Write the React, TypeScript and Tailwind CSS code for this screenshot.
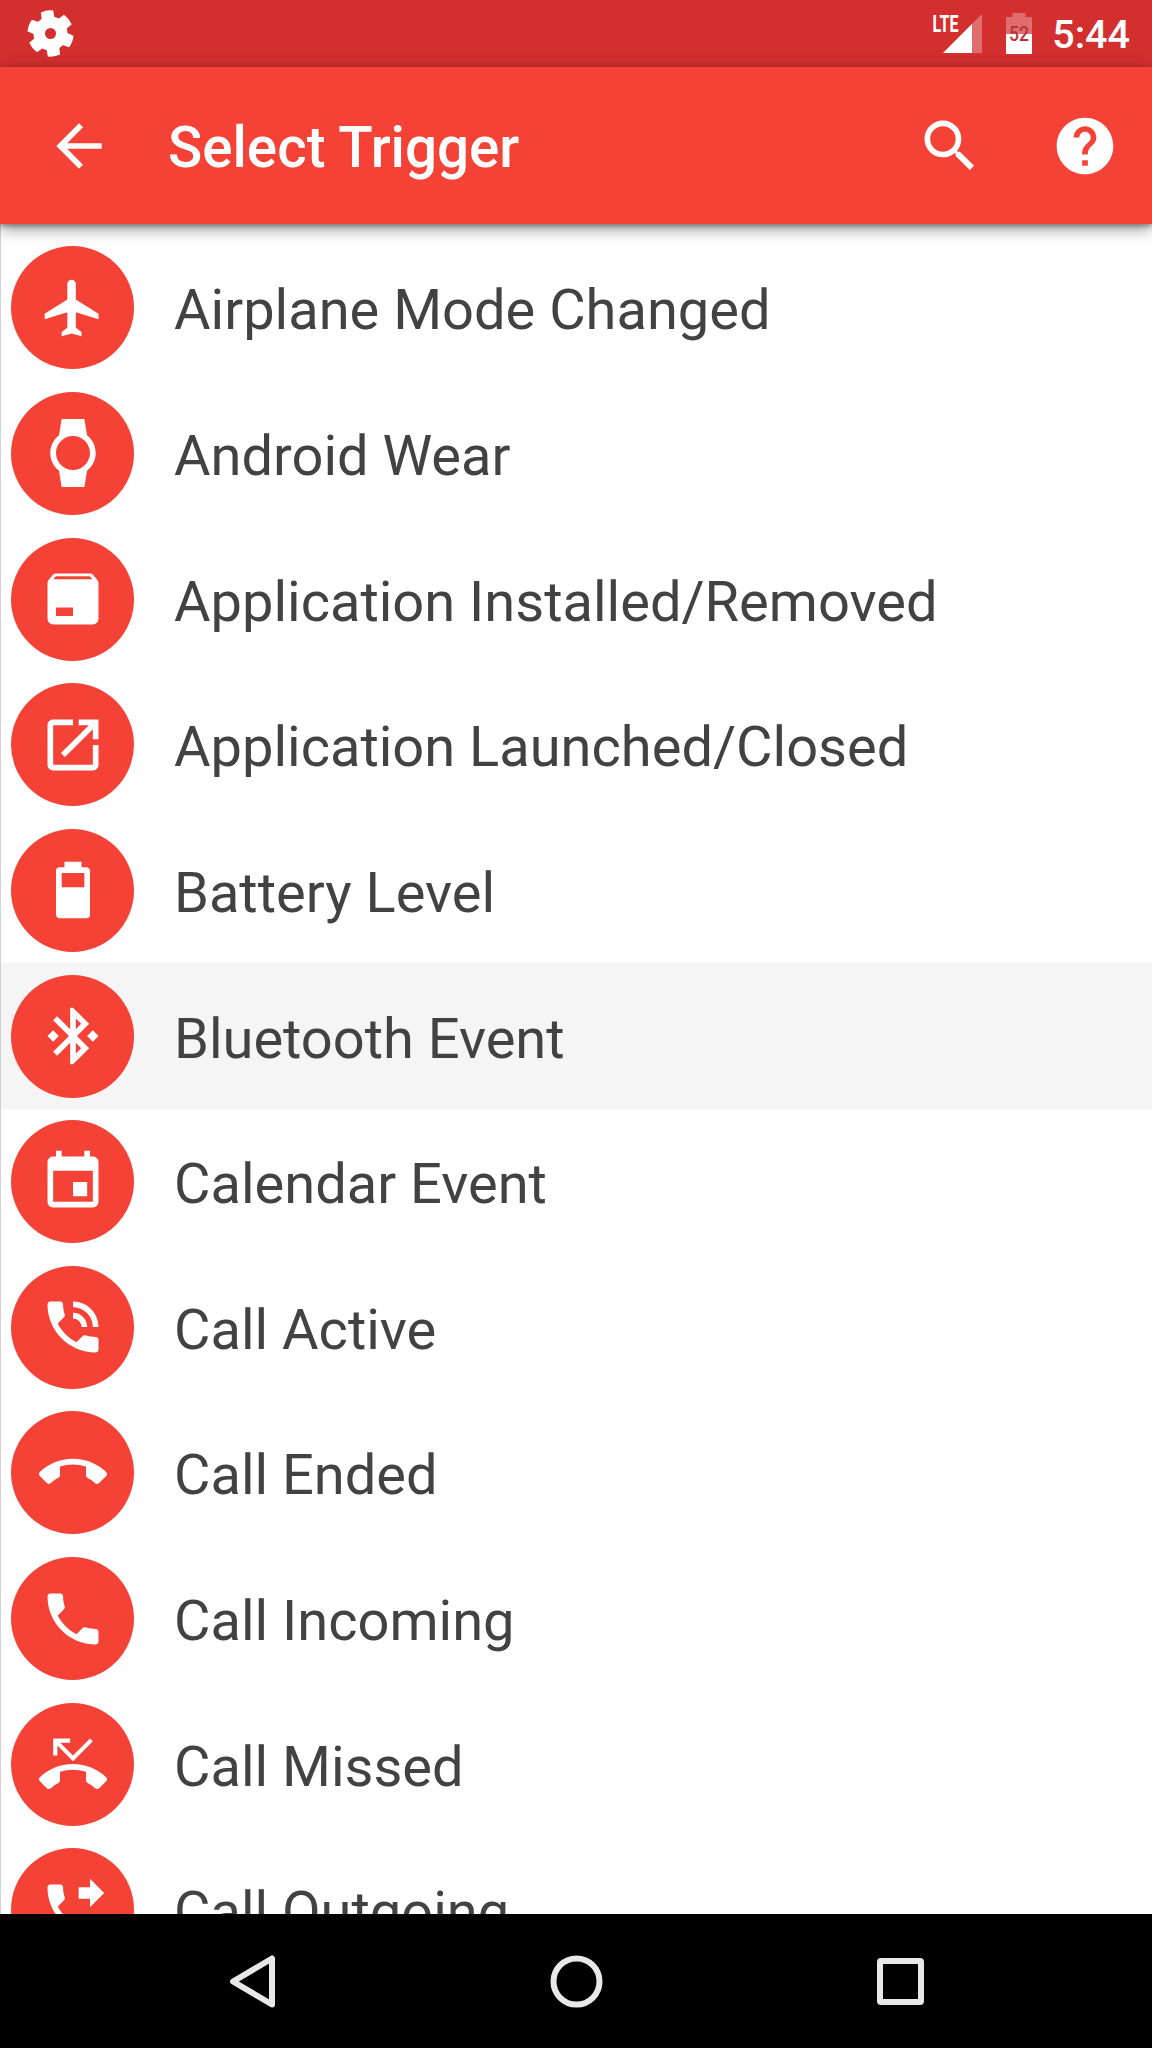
import React from 'react';

interface Trigger {
    label: string;
    icon: string;
    pressed?: boolean;
}

const TRIGGERS: Trigger[] = [
    {
        label: 'Airplane Mode Changed',
        icon: 'M21 16v-2l-8-5V3.5c0-.83-.67-1.5-1.5-1.5S10 2.67 10 3.5V9l-8 5v2l8-2.5V19l-2 1.5V22l3.5-1 3.5 1v-1.5L13 19v-5.5l8 2.5z',
    },
    {
        label: 'Android Wear',
        icon: 'M20 12c0-2.54-1.19-4.81-3.04-6.27L16 0H8l-.95 5.73C5.19 7.19 4 9.45 4 12s1.19 4.81 3.05 6.27L8 24h8l.96-5.73C18.81 16.81 20 14.54 20 12zM6 12c0-3.31 2.69-6 6-6s6 2.69 6 6-2.69 6-6 6-6-2.69-6-6z',
    },
    {
        label: 'Application Installed/Removed',
        icon: 'M5.12 5H18.87L17.93 4H5.93L5.12 5M20.54 5.23C20.83 5.57 21 6 21 6.5V19A2 2 0 0 1 19 21H5A2 2 0 0 1 3 19V6.5C3 6 3.17 5.57 3.46 5.23L4.84 3.55C5.12 3.21 5.53 3 6 3H18C18.47 3 18.88 3.21 19.15 3.55L20.54 5.23M6 18H12V15H6V18Z',
    },
    {
        label: 'Application Launched/Closed',
        icon: 'M19 19H5V5h7V3H5c-1.11 0-2 .9-2 2v14c0 1.1.89 2 2 2h14c1.1 0 2-.9 2-2v-7h-2v7zM14 3v2h3.59l-9.83 9.83 1.41 1.41L19 6.41V10h2V3h-7z',
    },
    {
        label: 'Battery Level',
        icon: 'M16 11H8V6H16M16.67 4H15V2H9V4H7.33A1.33 1.33 0 0 0 6 5.33V20.67C6 21.4 6.6 22 7.33 22H16.67A1.33 1.33 0 0 0 18 20.67V5.33C18 4.6 17.4 4 16.67 4Z',
    },
    {
        label: 'Bluetooth Event',
        icon: 'M7 12l-2-2-2 2 2 2 2-2zm10.71-4.29L12 2h-1v7.59L6.41 5 5 6.41 10.59 12 5 17.59 6.41 19 11 14.41V22h1l5.71-5.71-4.3-4.29 4.3-4.29zM13 5.83l1.88 1.88L13 9.59V5.83zm1.88 10.46L13 18.17v-3.76l1.88 1.88zM19 10l-2 2 2 2 2-2-2-2z',
        pressed: true,
    },
    {
        label: 'Calendar Event',
        icon: 'M17 12h-5v5h5v-5zM16 1v2H8V1H6v2H5c-1.11 0-1.99.9-1.99 2L3 19c0 1.1.89 2 2 2h14c1.1 0 2-.9 2-2V5c0-1.1-.9-2-2-2h-1V1h-2zm3 18H5V8h14v11z',
    },
    {
        label: 'Call Active',
        icon: 'M20 15.5c-1.25 0-2.45-.2-3.57-.57-.35-.11-.74-.03-1.02.24l-2.2 2.2c-2.83-1.44-5.15-3.75-6.59-6.59l2.2-2.21c.28-.26.36-.65.25-1C8.7 6.45 8.5 5.25 8.5 4c0-.55-.45-1-1-1H4c-.55 0-1 .45-1 1 0 9.39 7.61 17 17 17 .55 0 1-.45 1-1v-3.5c0-.55-.45-1-1-1zM19 12h2c0-4.97-4.03-9-9-9v2c3.87 0 7 3.13 7 7zm-4 0h2c0-2.76-2.24-5-5-5v2c1.66 0 3 1.34 3 3z',
    },
    {
        label: 'Call Ended',
        icon: 'M12 9c-1.6 0-3.15.25-4.6.72v3.1c0 .39-.23.74-.56.9-.98.49-1.87 1.12-2.66 1.85-.18.18-.43.28-.7.28-.28 0-.53-.11-.71-.29L.29 13.08c-.18-.17-.29-.42-.29-.7 0-.28.11-.53.29-.71C3.34 8.78 7.46 7 12 7s8.66 1.78 11.71 4.67c.18.18.29.43.29.71 0 .28-.11.53-.29.71l-2.48 2.48c-.18.18-.43.29-.71.29-.27 0-.52-.11-.7-.28-.79-.74-1.69-1.36-2.67-1.85-.33-.16-.56-.5-.56-.9v-3.1C15.15 9.25 13.6 9 12 9z',
    },
    {
        label: 'Call Incoming',
        icon: 'M6.62 10.79c1.44 2.83 3.76 5.14 6.59 6.59l2.2-2.2c.27-.27.67-.36 1.02-.24 1.12.37 2.33.57 3.57.57.55 0 1 .45 1 1V20c0 .55-.45 1-1 1-9.39 0-17-7.61-17-17 0-.55.45-1 1-1h3.5c.55 0 1 .45 1 1 0 1.25.2 2.45.57 3.57.11.35.03.74-.25 1.02l-2.2 2.2z',
    },
    {
        label: 'Call Missed',
        icon: 'M6.5 5.5L12 11l7-7-1-1-6 6-4.5-4.5H11V3H5v6h1.5V5.5zm17.21 11.17C20.66 13.78 16.54 12 12 12 7.46 12 3.34 13.78.29 16.67c-.18.18-.29.43-.29.71 0 .28.11.53.29.71l2.48 2.48c.18.18.43.29.71.29.27 0 .52-.11.7-.28.79-.74 1.69-1.36 2.66-1.85.33-.16.56-.5.56-.9v-3.1c1.45-.48 3-.73 4.6-.73 1.6 0 3.15.25 4.6.72v3.1c0 .39.23.74.56.9.98.49 1.87 1.12 2.66 1.85.18.18.43.28.7.28.28 0 .53-.11.71-.29l2.48-2.48c.18-.18.29-.43.29-.71 0-.28-.12-.52-.3-.7z',
    },
    {
        label: 'Call Outgoing',
        icon: 'M18 11l5-5-5-5v3h-4v4h4v3zm2 4.5c-1.25 0-2.45-.2-3.57-.57-.35-.11-.74-.03-1.02.24l-2.2 2.2c-2.83-1.44-5.15-3.75-6.59-6.59l2.2-2.21c.28-.26.36-.65.25-1C8.7 6.45 8.5 5.25 8.5 4c0-.55-.45-1-1-1H4c-.55 0-1 .45-1 1 0 9.39 7.61 17 17 17 .55 0 1-.45 1-1v-3.5c0-.55-.45-1-1-1z',
    },
];

const ARROW_BACK = 'M20 11H7.83l5.59-5.59L12 4l-8 8 8 8 1.41-1.41L7.83 13H20v-2z';
const SEARCH = 'M15.5 14h-.79l-.28-.27C15.41 12.59 16 11.11 16 9.5 16 5.91 13.09 3 9.5 3S3 5.91 3 9.5 5.91 16 9.5 16c1.61 0 3.09-.59 4.23-1.57l.27.28v.79l5 4.99L20.49 19l-4.99-5zm-6 0C7.01 14 5 11.99 5 9.5S7.01 5 9.5 5 14 7.01 14 9.5 11.99 14 9.5 14z';
const HELP = 'M12 2C6.48 2 2 6.48 2 12s4.48 10 10 10 10-4.48 10-10S17.52 2 12 2zm1 17h-2v-2h2v2zm2.07-7.75l-.9.92C13.45 12.9 13 13.5 13 15h-2v-.5c0-1.1.45-2.1 1.17-2.83l1.24-1.26c.37-.36.59-.86.59-1.41 0-1.1-.9-2-2-2s-2 .9-2 2H8c0-2.21 1.79-4 4-4s4 1.79 4 4c0 .88-.36 1.68-.93 2.25z';

const Icon: React.FC<{ d: string }> = ({ d }) => (
    <svg className="w-[68px] h-[68px] shrink-0" viewBox="0 0 24 24" fill="currentColor" fillRule="evenodd">
        <path d={d} />
    </svg>
);

const GearIcon: React.FC = () => (
    <svg className="w-[47px] h-[47px] shrink-0" viewBox="-23.5 -23.5 47 47" fill="currentColor">
        <circle r="11.25" fill="none" stroke="currentColor" strokeWidth="11.5" />
        {[0, 1, 2, 3, 4, 5].map(i => (
            <path key={i} d="M-6.5 -13L-6.2 -22.3Q0 -24 6.2 -22.3L6.5 -13Z" transform={`rotate(${i * 60 - 9})`} />
        ))}
    </svg>
);

const StatusBar: React.FC = () => (
    <div className="h-[67px] shrink-0 flex items-center bg-[#d32f2f] pl-[27px] pr-[22px]">
        <GearIcon />
        <div className="ml-auto flex items-center">
            <svg className="w-[54px] h-12" viewBox="-4 -4 54 48" fill="currentColor">
                <path d="M49 0V39H10Z" fillOpacity="0.3" />
                <path d="M39 10V39H10Z" />
                <text x="-0.5" y="18" fontSize="23" fontWeight="700" textLength="26" lengthAdjust="spacingAndGlyphs">LTE</text>
            </svg>
            <svg className="ml-[23px] w-[26px] h-[41px]" viewBox="0 0 26 41" fill="currentColor">
                <path d="M0 4H6.5V0H19.5V4H26V21H0Z" fillOpacity="0.3" />
                <path d="M0 21H26V41H0Z" />
                <text x="13" y="28" fontSize="20" fontWeight="500" textAnchor="middle" fill="#b93238" textLength="20" lengthAdjust="spacingAndGlyphs">52</text>
            </svg>
            <span className="ml-5 pt-[3px] text-[39.5px] leading-none font-medium">5:44</span>
        </div>
    </div>
);

const AppBar: React.FC = () => (
    <header className="relative z-10 h-[157px] shrink-0 flex items-center bg-[#f44336] pl-[45px] pr-[33px] shadow-[0_2px_5px_rgba(0,0,0,0.35),0_5px_15px_rgba(0,0,0,0.4)]">
        <button><Icon d={ARROW_BACK} /></button>
        <h1 className="ml-[55px] pt-[6px] text-[56.5px] leading-none font-medium">Select Trigger</h1>
        <div className="ml-auto flex items-center gap-[67px]">
            <button><Icon d={SEARCH} /></button>
            <button><Icon d={HELP} /></button>
        </div>
    </header>
);

const NavBar: React.FC = () => (
    <nav className="h-[134px] shrink-0 flex items-center bg-black text-[#e8e8e8]">
        <svg className="w-full h-full" viewBox="0 0 1152 134" fill="none" stroke="currentColor" strokeWidth="6" strokeLinejoin="round">
            <path d="M272 44.5V90.5L233 67.5Z" />
            <circle cx="576.5" cy="67.5" r="23" />
            <rect x="880" y="47" width="41" height="41" rx="1" />
        </svg>
    </nav>
);

const App: React.FC = () => {
    return (
        <div className="w-[1152px] h-[2048px] flex flex-col overflow-hidden bg-white text-white font-[Roboto,sans-serif]">
            <StatusBar />
            <AppBar />
            <ul className="flex-1 min-h-0 overflow-hidden pt-[11px] border-l border-[#d0d0d0]">
                {TRIGGERS.map(trigger => (
                    <li
                        key={trigger.label}
                        className={`h-[145.65px] flex items-center pl-[10px] ${trigger.pressed ? 'bg-[#f5f5f5]' : 'bg-white'}`}
                    >
                        <span className="w-[123px] h-[123px] shrink-0 rounded-full flex items-center justify-center bg-[#f44336]">
                            <Icon d={trigger.icon} />
                        </span>
                        <span className="ml-[40px] pt-[5px] text-[56px] leading-none whitespace-nowrap text-[#424242]">{trigger.label}</span>
                    </li>
                ))}
            </ul>
            <NavBar />
        </div>
    );
};

export default App;
